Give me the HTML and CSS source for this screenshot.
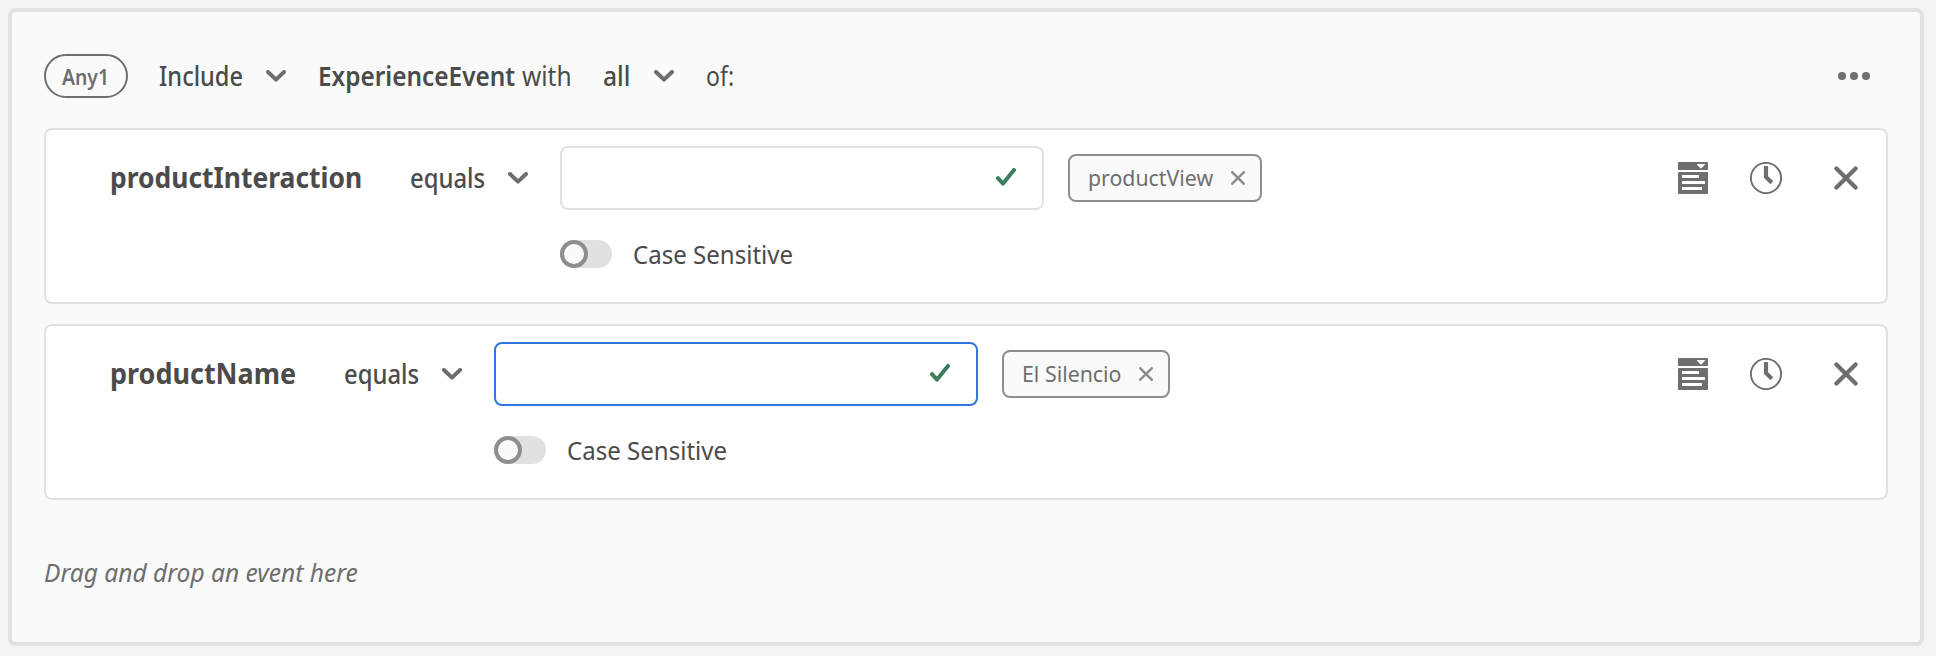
FILE: index.html
```html
<!DOCTYPE html>
<html lang="en">
<head>
<meta charset="utf-8">
<title>Segment rule</title>
<link rel="stylesheet" href="styles.css">
</head>
<body>
<svg class="defs" width="0" height="0">
  <symbol id="chevron" viewBox="0 0 20 12"><path d="M2 2l8 7.6L18 2" fill="none" stroke="#6e6e6e" stroke-width="4" stroke-linecap="round" stroke-linejoin="round"/></symbol>
  <symbol id="check" viewBox="0 0 20 18"><path d="M2 10.2l5 5.4L18 2" fill="none" stroke="#3a7f5d" stroke-width="4" stroke-linecap="round" stroke-linejoin="round"/></symbol>
  <symbol id="small-x" viewBox="0 0 14 14"><path d="M1.3 1.3l11.4 11.4M12.7 1.3L1.3 12.7" stroke="#8e8e8e" stroke-width="2.6" stroke-linecap="round"/></symbol>
  <symbol id="close" viewBox="0 0 24 24"><path d="M2.4 2.4l19.2 19.2M21.6 2.4L2.4 21.6" stroke="#6e6e6e" stroke-width="4.2" stroke-linecap="round"/></symbol>
  <symbol id="list" viewBox="0 0 30 32"><path fill="#6e6e6e" fill-rule="evenodd" d="M1 0h28a1 1 0 0 1 1 1v6a1 1 0 0 1-1 1H1a1 1 0 0 1-1-1V1a1 1 0 0 1 1-1zM19.5 2a.5.5 0 0 0-.4.8l3.4 3.4a.7.7 0 0 0 1 0l3.4-3.4a.5.5 0 0 0-.4-.8zM1 10h28a1 1 0 0 1 1 1v20a1 1 0 0 1-1 1H1a1 1 0 0 1-1-1V11a1 1 0 0 1 1-1zM4 13v3h17v-3zM4 19v3h23v-3zM4 25v3h20v-3z"/></symbol>
  <symbol id="clock" viewBox="0 0 32 32"><circle cx="16" cy="16" r="15.1" fill="none" stroke="#6e6e6e" stroke-width="1.9"/><path fill="#6e6e6e" d="M14.5 4h3a.6.6 0 0 1 .6.6v9.7l4.7 4.5a.6.6 0 0 1 0 .9l-2 2a.6.6 0 0 1-.9 0L14.2 16a1 1 0 0 1-.3-.7V4.600a.6.6 0 0 1 .6-.6z"/></symbol>
  <symbol id="more" viewBox="0 0 32 8"><g fill="#6e6e6e"><circle cx="4" cy="4" r="4"/><circle cx="16" cy="4" r="4"/><circle cx="28" cy="4" r="4"/></g></symbol>
</svg>
<main class="panel">
  <header class="head">
    <span class="pill"><span class="fit any">Any1</span></span>
    <span class="fit include">Include</span>
    <svg class="chev"><use href="#chevron"/></svg>
    <b class="fit event">ExperienceEvent</b>
    <span class="fit with">with</span>
    <span class="fit all">all</span>
    <svg class="chev"><use href="#chevron"/></svg>
    <span class="fit of">of:</span>
    <svg class="more"><use href="#more"/></svg>
  </header>
  <section class="card">
    <h2 class="name"><span class="fit interaction">productInteraction</span></h2>
    <div class="op"><span class="fit equals">equals</span><svg class="chev"><use href="#chevron"/></svg></div>
    <div class="value">
      <div class="row">
        <div class="input"><svg class="check"><use href="#check"/></svg></div>
        <div class="tag"><span class="fit view">productView</span><svg class="small-x"><use href="#small-x"/></svg></div>
      </div>
      <div class="switch"><span class="track"><span class="knob"></span></span><span class="fit case">Case Sensitive</span></div>
    </div>
    <div class="actions">
      <svg class="list"><use href="#list"/></svg>
      <svg class="clock"><use href="#clock"/></svg>
      <svg class="close"><use href="#close"/></svg>
    </div>
  </section>
  <section class="card">
    <h2 class="name"><span class="fit product">productName</span></h2>
    <div class="op"><span class="fit equals">equals</span><svg class="chev"><use href="#chevron"/></svg></div>
    <div class="value">
      <div class="row">
        <div class="input focused"><svg class="check"><use href="#check"/></svg></div>
        <div class="tag"><span class="fit silencio">El Silencio</span><svg class="small-x"><use href="#small-x"/></svg></div>
      </div>
      <div class="switch"><span class="track"><span class="knob"></span></span><span class="fit case">Case Sensitive</span></div>
    </div>
    <div class="actions">
      <svg class="list"><use href="#list"/></svg>
      <svg class="clock"><use href="#clock"/></svg>
      <svg class="close"><use href="#close"/></svg>
    </div>
  </section>
  <p class="hint"><span class="fit">Drag and drop an event here</span></p>
</main>
</body>
</html>
```
FILE: styles.css
```css
* { box-sizing: border-box; }
body {
  margin: 0;
  padding: 8px 12px 10px 8px;
  height: 656px;
  background: #f4f4f4;
  color: #4b4b4b;
  font: 26.5px/36px "Noto Sans", "Open Sans", sans-serif;
  overflow: hidden;
}
svg { display: block; flex: none; }
.defs { position: absolute; }

/* Condensed words: fixed layout width, glyphs scaled from the left edge */
.fit { display: block; flex: none; white-space: nowrap; transform-origin: 0 50%; }

.panel {
  height: 638px;
  padding: 42px 32px 0;
  background: #fafafa;
  border: 4px solid #e1e1e1;
  border-radius: 8px;
}
.head { display: flex; align-items: center; height: 44px; margin-bottom: 30px; }
.pill {
  display: flex; align-items: center;
  width: 84px; height: 44px; padding-left: 16px; margin-right: 31px;
  border: 2px solid #6e6e6e; border-radius: 22px;
  color: #6e6e6e; font-size: 22px; font-weight: 600;
}
.any { width: 48px; transform: scaleX(.88); }
.include { width: 85px; margin-right: 22px; font-weight: 500; transform: scaleX(.89); }
.event { width: 197px; margin: 0 7px 0 32px; font-weight: 600; transform: scaleX(.92); }
.with { width: 50px; margin-right: 31px; transform: scaleX(.925); }
.all { width: 27px; margin-right: 24px; font-weight: 500; transform: scaleX(.93); }
.of { width: 28px; margin-left: 32px; transform: scaleX(.87); }

.chev { width: 20px; height: 12px; }
.more { width: 32px; height: 8px; margin: 0 18px 0 auto; }

.card {
  display: flex; align-items: flex-start;
  height: 176px; margin-bottom: 20px; padding: 16px 28px 0 64px;
  background: #fff; border: 2px solid #e1e1e1; border-radius: 8px;
}
.name {
  display: flex; align-items: center;
  height: 62px; margin: 0; font-size: 29px; font-weight: 700;
}
.interaction { width: 300px; transform: scaleX(.912); }
.product { width: 234px; transform: scaleX(.93); }
.op { display: flex; align-items: center; height: 64px; margin-right: 32px; }
.equals { width: 98px; font-weight: 500; transform: scaleX(.9); }

.row { display: flex; align-items: center; gap: 24px; height: 64px; }
.input {
  display: flex; align-items: center; justify-content: flex-end;
  width: 484px; height: 64px; padding-right: 26px;
  border: 2px solid #e1e1e1; border-radius: 8px;
}
.focused { border-color: #2f77df; }
.check { width: 20px; height: 18px; margin-bottom: 2px; }
.tag {
  display: flex; align-items: center;
  height: 48px; padding: 0 15px 0 18px;
  background: #fafafa; border: 2px solid #8e8e8e; border-radius: 8px;
  color: #6e6e6e; font-size: 22px;
}
.tag .fit { padding-bottom: 2px; }
.view { width: 143px; transform: scaleX(.968); }
.silencio { width: 117px; transform: scaleX(.97); }
.small-x { width: 14px; height: 14px; }

.switch { display: flex; align-items: center; height: 28px; margin-top: 30px; font-size: 26px; }
.track { width: 52px; height: 28px; margin-right: 21px; border-radius: 14px; background: #e1e1e1; }
.knob { display: block; width: 28px; height: 28px; border: 4px solid #8e8e8e; border-radius: 50%; background: #fafafa; }
.case { transform: scaleX(.925); }

.actions { display: flex; align-items: center; height: 64px; margin-left: auto; }
.list { width: 30px; height: 32px; }
.clock { width: 32px; height: 32px; margin: 0 52px 0 42px; }
.close { width: 24px; height: 24px; }

.hint { margin: 54px 0 0; color: #6e6e6e; font-size: 26px; font-style: italic; }
.hint .fit { width: 320px; transform: scaleX(.945); }
```
